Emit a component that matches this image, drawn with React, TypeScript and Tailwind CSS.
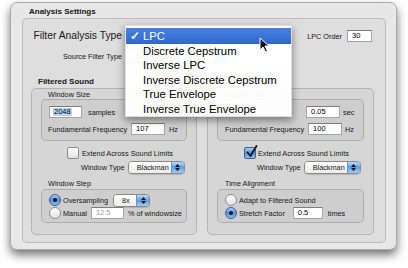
import React from "react";

// Aqua-ish controls, small enough to match the downscaled screenshot
function Field({ value, w, selected, disabled }: { value: string; w: number; selected?: boolean; disabled?: boolean }) {
  return (
    <div
      className={`h-[12px] shrink-0 border border-[#a5a5a5] border-t-[#7d7d7d] bg-white flex items-center pl-[4px] text-[7.5px] leading-none ${
        disabled ? "text-[#a0a0a0]" : "text-black"
      }`}
      style={{ width: w }}
    >
      <span className={selected ? "bg-[#b5d3f7] px-[1px] -ml-[1px]" : ""}>{value}</span>
    </div>
  );
}

function Popup({ label, w }: { label: string; w: number }) {
  return (
    <div
      className="h-[13px] shrink-0 flex rounded-[4px] border border-[#8a8a8a] overflow-hidden shadow-[0_1px_1px_rgba(0,0,0,0.15)]"
      style={{ width: w }}
    >
      <div className="flex-1 bg-gradient-to-b from-white to-[#ececec] text-[7.3px] leading-[11px] pl-[8px]">{label}</div>
      <div className="w-[13px] border-l border-[#6d8fbf] bg-gradient-to-b from-[#b9dbfb] via-[#5a9de9] to-[#9fd0fb] flex flex-col items-center justify-center gap-[1px]">
        <svg width="5" height="3" viewBox="0 0 5 3"><path d="M2.5 0 L5 3 L0 3 Z" fill="#111" /></svg>
        <svg width="5" height="3" viewBox="0 0 5 3"><path d="M0 0 L5 0 L2.5 3 Z" fill="#111" /></svg>
      </div>
    </div>
  );
}

function Check({ checked }: { checked?: boolean }) {
  return (
    <div
      className={`relative w-[12px] h-[12px] shrink-0 rounded-[2px] border ${
        checked
          ? "border-[#3d5f93] bg-gradient-to-b from-[#a8d0f8] via-[#4b8fe3] to-[#8cc4f8]"
          : "border-[#8d8d8d] bg-gradient-to-b from-white to-[#e2e2e2]"
      }`}
    >
      {checked && (
        <svg className="absolute left-[1px] -top-[3px]" width="12" height="13" viewBox="0 0 12 13">
          <path d="M1.5 7.5 L4.5 11 L10.5 1" stroke="#111" strokeWidth="1.8" fill="none" strokeLinecap="round" />
        </svg>
      )}
    </div>
  );
}

function Radio({ checked }: { checked?: boolean }) {
  return (
    <div
      className={`w-[12px] h-[12px] shrink-0 rounded-full border flex items-center justify-center ${
        checked
          ? "border-[#3d5f93] bg-gradient-to-b from-[#a8d0f8] via-[#4b8fe3] to-[#8cc4f8]"
          : "border-[#8d8d8d] bg-gradient-to-b from-white to-[#e2e2e2]"
      }`}
    >
      {checked && <div className="w-[4px] h-[4px] rounded-full bg-[#111]" />}
    </div>
  );
}

const box = "border border-[rgba(0,0,0,0.16)] bg-[rgba(0,0,0,0.035)] rounded-[5px]";
const small = "text-[7.3px] leading-[9px] whitespace-nowrap";

export default function App() {
  const items = ["Discrete Cepstrum", "Inverse LPC", "Inverse Discrete Cepstrum", "True Envelope", "Inverse True Envelope"];

  return (
    <div className="relative w-[408px] h-[268px] overflow-hidden bg-white text-[#161616] font-['Liberation_Sans',Arial,sans-serif]">
      {/* window */}
      <div className="ml-[10px] mt-[2px] w-[387px] h-[248px] rounded-[7px] bg-[#e7e7e7] border border-[#adadad] shadow-[0_5px_10px_rgba(0,0,0,0.55)] pt-[4px]">
        <div className="pl-[18px] h-[10px] text-[8px] leading-[10px] font-bold">Analysis Settings</div>

        <div className={`ml-[11px] mt-[1px] w-[364px] h-[225px] ${box}`}>
          {/* filter type row */}
          <div className="flex items-center h-[16px] mt-[9px] pl-[8px] pr-[13px]">
            <div className="w-[91px] text-right text-[10.3px] leading-[16px] whitespace-nowrap">Filter Analysis Type</div>
            <div className="flex-1" />
            <span className={small}>LPC Order</span>
            <div className="ml-[5px]">
              <Field value="30" w={25} />
            </div>
          </div>

          {/* source filter row */}
          <div className="flex items-center h-[13px] mt-[6px] pl-[8px]">
            <div className={`w-[91px] text-right ${small}`}>Source Filter Type</div>
            <div className="ml-[5px]">
              <Popup label="Amplitude" w={101} />
            </div>
          </div>

          {/* columns */}
          <div className="flex gap-[10px] pl-[8px] mt-[14px]">
            {/* left */}
            <div className="w-[166px]">
              <div className="pl-[7px] h-[10px] text-[8px] leading-[10px] font-bold">Filtered Sound</div>
              <div className={`mt-[1px] h-[147px] ${box}`}>
                <div className={`pl-[16px] pt-[1px] h-[10px] ${small}`}>Window Size</div>
                <div className={`ml-[9px] w-[146px] h-[42px] ${box}`}>
                  <div className="flex items-center h-[12px] mt-[6px] pl-[7px]">
                    <Field value="2048" w={33} selected />
                    <span className={`ml-[6px] ${small}`}>samples</span>
                    <span className={`ml-[17px] text-[#b4b4b4] ${small}`}>0.04644&nbsp;&nbsp;sec</span>
                  </div>
                  <div className="flex items-center h-[12px] mt-[5px] pl-[6px]">
                    <span className={small}>Fundamental Frequency</span>
                    <div className="ml-[4px]">
                      <Field value="107" w={34} />
                    </div>
                    <span className={`ml-[4px] ${small}`}>Hz</span>
                  </div>
                </div>
                <div className="flex items-center h-[12px] mt-[6px] pl-[35px]">
                  <Check />
                  <span className={`ml-[3px] ${small}`}>Extend Across Sound Limits</span>
                </div>
                <div className="flex items-center h-[13px] mt-[2px] pl-[49px]">
                  <span className={small}>Window Type</span>
                  <div className="ml-[3px]">
                    <Popup label="Blackman" w={57} />
                  </div>
                </div>
                <div className={`pl-[16px] mt-[5px] h-[10px] text-[7.3px] leading-[10px]`}>Window Step</div>
                <div className={`ml-[9px] w-[146px] h-[34px] ${box}`}>
                  <div className="flex items-center h-[12px] mt-[4px] pl-[7px]">
                    <Radio checked />
                    <span className={`ml-[2px] ${small}`}>Oversampling</span>
                    <div className="ml-[5px]">
                      <Popup label="8x" w={37} />
                    </div>
                  </div>
                  <div className="flex items-center h-[12px] mt-[1px] pl-[7px]">
                    <Radio />
                    <span className={`ml-[2px] ${small}`}>Manual</span>
                    <div className="ml-[4px]">
                      <Field value="12.5" w={33} disabled />
                    </div>
                    <span className={`ml-[4px] ${small}`}>% of windowsize</span>
                  </div>
                </div>
              </div>
            </div>

            {/* right */}
            <div className="w-[167px]">
              <div className="pl-[7px] h-[10px] text-[8px] leading-[10px] font-bold">Filtering Sound</div>
              <div className={`mt-[1px] h-[147px] ${box}`}>
                <div className={`pl-[16px] pt-[1px] h-[10px] ${small}`}>Window Size</div>
                <div className={`ml-[9px] w-[147px] h-[42px] ${box}`}>
                  <div className="flex items-center h-[12px] mt-[6px] pl-[7px]">
                    <span className={`w-[81px] text-[#b4b4b4] ${small}`}>2205&nbsp;&nbsp;&nbsp;&nbsp;&nbsp;samples</span>
                    <Field value="0.05" w={34} />
                    <span className={`ml-[3px] ${small}`}>sec</span>
                  </div>
                  <div className="flex items-center h-[12px] mt-[5px] pl-[7px]">
                    <span className={small}>Fundamental Frequency</span>
                    <div className="ml-[4px]">
                      <Field value="100" w={34} />
                    </div>
                    <span className={`ml-[3px] ${small}`}>Hz</span>
                  </div>
                </div>
                <div className="flex items-center h-[12px] mt-[6px] pl-[36px]">
                  <Check checked />
                  <span className={`ml-[2px] ${small}`}>Extend Across Sound Limits</span>
                </div>
                <div className="flex items-center h-[13px] mt-[2px] pl-[49px]">
                  <span className={small}>Window Type</span>
                  <div className="ml-[3px]">
                    <Popup label="Blackman" w={57} />
                  </div>
                </div>
                <div className={`pl-[17px] mt-[5px] h-[10px] text-[7.3px] leading-[10px]`}>Time Alignment</div>
                <div className={`ml-[9px] w-[147px] h-[34px] ${box}`}>
                  <div className="flex items-center h-[12px] mt-[4px] pl-[7px]">
                    <Radio />
                    <span className={`ml-[2px] ${small}`}>Adapt to Filtered Sound</span>
                  </div>
                  <div className="flex items-center h-[12px] mt-[1px] pl-[7px]">
                    <Radio checked />
                    <span className={`ml-[2px] ${small}`}>Stretch Factor</span>
                    <div className="ml-[8px]">
                      <Field value="0.5" w={30} />
                    </div>
                    <span className={`ml-[5px] ${small}`}>times</span>
                  </div>
                </div>
              </div>
            </div>
          </div>
        </div>
      </div>

      {/* open popup menu */}
      <div className="absolute left-[125px] top-[25px] w-[167px] h-[92px] pt-[2px] bg-[rgba(255,255,255,0.95)] shadow-[0_3px_8px_rgba(0,0,0,0.45)] border border-[rgba(0,0,0,0.12)] text-[11.3px] leading-[14.4px] text-black">
        <div className="flex items-center h-[16px] bg-gradient-to-b from-[#4b82de] to-[#2f67d0] text-white">
          <span className="w-[17px] pl-[4px] text-[12px] font-bold leading-[16px]">✓</span>
          <span>LPC</span>
        </div>
        {items.map((t) => (
          <div key={t} className="h-[14.4px] pl-[17px] whitespace-nowrap">
            {t}
          </div>
        ))}
      </div>

      {/* mouse pointer */}
      <svg className="absolute left-[259px] top-[37px]" width="11" height="16" viewBox="0 0 11 16">
        <path d="M1 1 L1 13 L4 10 L6.5 15 L8.5 14 L6 9 L10 9 Z" fill="#111" stroke="#fff" strokeWidth="1" strokeLinejoin="round" />
      </svg>
    </div>
  );
}
